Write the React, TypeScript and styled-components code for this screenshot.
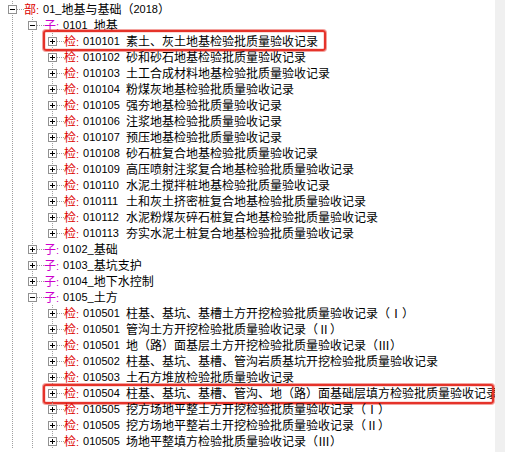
import React from "react";
import styled, { createGlobalStyle, css } from "styled-components";

const GlobalStyle = createGlobalStyle`
  html, body {
    margin: 0;
    padding: 0;
    background: #fff;
  }
  body {
    font-family: "Noto Sans CJK SC", "Liberation Sans", sans-serif;
  }
`;

const dotsDown = "repeating-linear-gradient(to bottom, #a0a0a0 0 1px, transparent 1px 2px)";
const dotsRight = "repeating-linear-gradient(to right, #a0a0a0 0 1px, transparent 1px 2px)";

const Screen = styled.div`
  display: flex;
  width: 505px;
  height: 452px;
  overflow: hidden;
  background: #fff;
`;

const Tree = styled.ul`
  flex: 1;
  min-width: 0;
  margin: 0;
  padding: 1px 0 0;
  list-style: none;
  overflow: hidden;
`;

const Gutter = styled.div`
  flex: none;
  width: 10px;
  background: #f0f0f0;
`;

const Row = styled.li`
  position: relative;
  display: flex;
  height: 16px;
  white-space: nowrap;
  font-size: 12px;
  line-height: 16px;
  color: #000;
`;

const Guide = styled.span<{ $on: boolean }>`
  flex: none;
  width: 20px;
  height: 16px;
  ${p =>
    p.$on &&
    css`
      background: ${dotsDown} no-repeat 12px 0 / 1px 100%;
    `}
`;

const Joint = styled.span<{ $last: boolean }>`
  flex: none;
  width: 24px;
  height: 16px;
  background:
    ${dotsDown} no-repeat 12px 0 / 1px ${p => (p.$last ? "8px" : "16px")},
    ${dotsRight} no-repeat 17px 8px / 7px 1px;
`;

const Toggle = styled.span<{ $open: boolean }>`
  position: relative;
  display: block;
  box-sizing: border-box;
  width: 9px;
  height: 9px;
  margin: 4px 0 0 8px;
  border: 1px solid #919191;
  background: #fff;

  &::before {
    content: "";
    position: absolute;
    left: 1px;
    top: 3px;
    width: 5px;
    height: 1px;
    background: #000;
  }

  ${p =>
    !p.$open &&
    css`
      &::after {
        content: "";
        position: absolute;
        left: 3px;
        top: 1px;
        width: 1px;
        height: 5px;
        background: #000;
      }
    `}
`;

const Label = styled.span`
  display: flex;
  align-items: center;
`;

const Kind = styled.span<{ $tone: string }>`
  color: ${p => p.$tone};
  margin-right: 4px;
`;

const Latin = styled.span`
  font-family: "Liberation Sans", sans-serif;
  font-size: 11px;
`;

const Code = styled(Latin)`
  display: inline-block;
  width: 43px;
`;

const Mark = styled.span<{ $top: number; $left: number; $width: number; $height: number }>`
  position: absolute;
  top: ${p => p.$top}px;
  left: ${p => p.$left}px;
  width: ${p => p.$width}px;
  height: ${p => p.$height}px;
  box-sizing: border-box;
  border: 2px solid #e5332a;
  border-radius: 3px;
  box-shadow:
    0 0 0 1px rgba(229, 51, 42, 0.45),
    inset 0 0 0 0.5px rgba(229, 51, 42, 0.35);
  pointer-events: none;
`;

const tones: Record<string, string> = {
  部: "#dc0000",
  子: "#cc00cc",
  检: "#dc0000",
};

const mixed = (s: string) =>
  s
    .split(/([\x20-\x7e]+)/)
    .filter(Boolean)
    .map((part, i) =>
      /^[\x20-\x7e]+$/.test(part) ? <Latin key={i}>{part}</Latin> : <span key={i}>{part}</span>
    );

type Node = {
  depth: number;
  kind: "部" | "子" | "检";
  code?: string;
  text: string;
  open?: boolean;
  last?: boolean;
  mark?: { top: number; left: number; width: number; height: number };
};

const check = (code: string, text: string, extra: Partial<Node> = {}): Node => ({
  depth: 2,
  kind: "检",
  code,
  text,
  ...extra,
});

const nodes: Node[] = [
  { depth: 0, kind: "部", text: "01_地基与基础（2018）", open: true },
  { depth: 1, kind: "子", text: "0101_地基", open: true },
  check("010101", "素土、灰土地基检验批质量验收记录", {
    mark: { top: -3, left: 43, width: 283, height: 21 },
  }),
  check("010102", "砂和砂石地基检验批质量验收记录"),
  check("010103", "土工合成材料地基检验批质量验收记录"),
  check("010104", "粉煤灰地基检验批质量验收记录"),
  check("010105", "强夯地基检验批质量验收记录"),
  check("010106", "注浆地基检验批质量验收记录"),
  check("010107", "预压地基检验批质量验收记录"),
  check("010108", "砂石桩复合地基检验批质量验收记录"),
  check("010109", "高压喷射注浆复合地基检验批质量验收记录"),
  check("010110", "水泥土搅拌桩地基检验批质量验收记录"),
  check("010111", "土和灰土挤密桩复合地基检验批质量验收记录"),
  check("010112", "水泥粉煤灰碎石桩复合地基检验批质量验收记录"),
  check("010113", "夯实水泥土桩复合地基检验批质量验收记录", { last: true }),
  { depth: 1, kind: "子", text: "0102_基础" },
  { depth: 1, kind: "子", text: "0103_基坑支护" },
  { depth: 1, kind: "子", text: "0104_地下水控制" },
  { depth: 1, kind: "子", text: "0105_土方", open: true },
  check("010501", "柱基、基坑、基槽土方开挖检验批质量验收记录（Ⅰ）"),
  check("010501", "管沟土方开挖检验批质量验收记录（Ⅱ）"),
  check("010501", "地（路）面基层土方开挖检验批质量验收记录（Ⅲ）"),
  check("010502", "柱基、基坑、基槽、管沟岩质基坑开挖检验批质量验收记录"),
  check("010503", "土石方堆放检验批质量验收记录"),
  check("010504", "柱基、基坑、基槽、管沟、地（路）面基础层填方检验批质量验收记录", {
    mark: { top: -1, left: 43, width: 451, height: 20 },
  }),
  check("010505", "挖方场地平整土方开挖检验批质量验收记录（Ⅰ）"),
  check("010505", "挖方场地平整岩土开挖检验批质量验收记录（Ⅱ）"),
  check("010505", "场地平整填方检验批质量验收记录（Ⅲ）"),
];

const TreeRow = ({ node }: { node: Node }) => (
  <Row>
    {Array.from({ length: node.depth }, (_, i) => (
      <Guide key={i} $on />
    ))}
    <Joint $last={!!node.last}>
      <Toggle $open={!!node.open} />
    </Joint>
    <Label>
      <Kind $tone={tones[node.kind]}>
        {node.kind}
        <Latin>:</Latin>
      </Kind>
      {node.code && <Code>{node.code}</Code>}
      {mixed(node.text)}
    </Label>
    {node.mark && (
      <Mark
        $top={node.mark.top}
        $left={node.mark.left}
        $width={node.mark.width}
        $height={node.mark.height}
      />
    )}
  </Row>
);

const App = () => (
  <>
    <GlobalStyle />
    <Screen>
      <Tree>
        {nodes.map((node, i) => (
          <TreeRow key={i} node={node} />
        ))}
      </Tree>
      <Gutter />
    </Screen>
  </>
);

export default App;
